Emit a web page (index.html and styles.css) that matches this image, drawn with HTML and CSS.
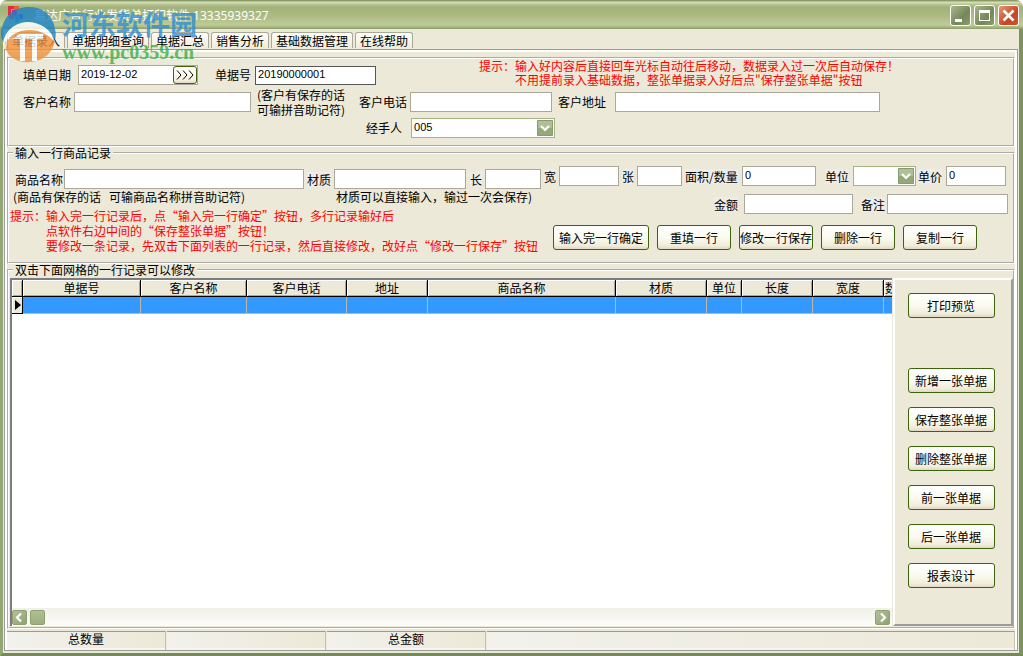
FILE: index.html
```html
<!DOCTYPE html>
<html lang="zh-CN">
<head>
<meta charset="utf-8">
<title>易达广告行业发货单打印软件</title>
<link rel="stylesheet" href="styles.css">
</head>
<body>
<div class="window">
  <header class="titlebar">
    <svg class="app-icon" width="18" height="18" viewBox="0 0 18 18" aria-hidden="true">
      <path d="M1 1h6v3H4v6H1z" fill="#e03040"/><path d="M7 1h5v4H7z" fill="#e8622c"/><path d="M5 5h5v6H5z" fill="#c82890"/><path d="M1 10h6v4H3z" fill="#e8308a"/><path d="M8 10h4v7H8z" fill="#30a0d8"/><path d="M12 9h4v5h-4z" fill="#6a4ad0"/>
    </svg>
    <h1 class="title">易达广告行业发货单打印软件 13335939327</h1>
    <div class="window-buttons">
      <button class="win-btn" aria-label="最小化"><svg width="19" height="19" viewBox="0 0 19 19"><path d="M4 13h7v3H4z" fill="#fff"/></svg></button>
      <button class="win-btn" aria-label="最大化"><svg width="19" height="19" viewBox="0 0 19 19"><path d="M4 4h11v11H4zM5 7v7h9V7z" fill="#fff" fill-rule="evenodd"/></svg></button>
      <button class="win-btn close" aria-label="关闭"><svg width="19" height="19" viewBox="0 0 19 19"><path d="M4.500 4.500l10 10M14.500 4.500l-10 10" stroke="#fff" stroke-width="2.600"/></svg></button>
    </div>
  </header>

  <div class="watermark" aria-hidden="true">
    <svg width="62" height="58" viewBox="0 0 62 58">
      <path d="M1 27C3 10 14 1 29 1c14 0 24 8 26 22 1 4 1 7 0 11-6-8-14-13-24-14C18 19 8 25 5 38 2 35 1 31 1 27z" fill="#1b82c4"/>
      <path d="M6 44C6 31 16 23 29 23c11 0 20 4 26 12-2 11-11 20-24 21C20 57 10 53 6 44z" fill="#f0913a"/>
      <path d="M3 40c0-13 10-23 24-24 14 0 25 8 28 20-7-8-16-12-25-12C17 24 8 30 3 40z" fill="#fff"/>
      <path d="M20 28h23v5h-6v22h-5V33h-7v22h-5V33h-8z" fill="#fff"/>
    </svg>
    <div class="watermark-text">
      <div class="watermark-name">河东软件园</div>
      <div class="watermark-url">www.pc0359.cn</div>
    </div>
  </div>

  <div class="client">
    <nav class="tabs" role="tablist">
      <button class="tab selected" role="tab" aria-selected="true">单据录入</button>
      <button class="tab" role="tab">单据明细查询</button>
      <button class="tab" role="tab">单据汇总</button>
      <button class="tab" role="tab">销售分析</button>
      <button class="tab" role="tab">基础数据管理</button>
      <button class="tab" role="tab">在线帮助</button>
    </nav>

    <main class="page">
      <section class="group order">
        <div class="order-top">
          <div class="row order-ids">
            <label class="label-date" for="date">填单日期</label>
            <div class="date-field"><input id="date" class="date" value="2019-12-02"><button class="btn date-btn" aria-label="选择日期"><svg width="18" height="10" viewBox="0 0 18 10"><path d="M1 0.500l4 4.500-4 4.500M7 0.500l4 4.500-4 4.500M13 0.500l4 4.500-4 4.500" fill="none" stroke="#000"/></svg></button></div>
            <label class="label-no" for="no">单据号</label>
            <input id="no" class="field dark no" value="20190000001">
          </div>
          <div class="tips order-tips">
            <div>提示：输入好内容后直接回车光标自动往后移动，数据录入过一次后自动保存！</div>
            <div class="indent">不用提前录入基础数据，整张单据录入好后点"保存整张单据"按钮</div>
          </div>
        </div>
        <div class="row customer">
          <label for="cname">客户名称</label>
          <input id="cname" class="field cname">
          <div class="customer-note">(客户有保存的话<br>可输拼音助记符)</div>
          <label for="phone">客户电话</label>
          <input id="phone" class="field phone">
          <label for="addr">客户地址</label>
          <input id="addr" class="field addr">
        </div>
        <div class="row handler">
          <label for="handler">经手人</label>
          <div class="combo handler-combo">
            <select id="handler"><option>005</option></select>
            <svg class="arrow" width="16" height="16" viewBox="0 0 16 16"><path d="M0.500 0.500h15v15H.5z" fill="#96a878" stroke="#8a9a70"/><path d="M1 1h14v7H1z" fill="#b0bf98"/><path d="M4 6l4 4 4-4" fill="none" stroke="#fff" stroke-width="2.200"/></svg>
          </div>
        </div>
      </section>

      <fieldset class="group item">
        <legend>输入一行商品记录</legend>
        <div class="item-body">
          <div class="item-left">
            <div class="row item-row">
              <label for="goods">商品名称</label><input id="goods" class="field goods">
              <label for="material">材质</label><input id="material" class="field material">
              <label for="len">长</label><input id="len" class="field len">
            </div>
            <div class="item-notes"><span class="note-goods">(商品有保存的话&nbsp;&nbsp; 可输商品名称拼音助记符)</span><span>材质可以直接输入，输过一次会保存)</span></div>
            <div class="tips item-tips">
              <div>提示：输入完一行记录后，点“输入完一行确定”按钮，多行记录输好后</div>
              <div class="indent">点软件右边中间的“保存整张单据”按钮！</div>
              <div class="indent">要修改一条记录，先双击下面列表的一行记录，然后直接修改，改好点“修改一行保存”按钮</div>
            </div>
          </div>
          <div class="item-right">
            <div class="row size-row">
              <label for="wid">宽</label><input id="wid" class="field wid">
              <label for="sheets">张</label><input id="sheets" class="field sheets">
              <label class="label-area" for="area">面积/数量</label><input id="area" class="field area" value="0">
              <label class="label-unit" for="unit">单位</label>
              <div class="combo unit-combo">
                <select id="unit"><option></option></select>
                <svg class="arrow" width="16" height="16" viewBox="0 0 16 16"><path d="M0.500 0.500h15v15H.5z" fill="#96a878" stroke="#8a9a70"/><path d="M1 1h14v7H1z" fill="#b0bf98"/><path d="M4 6l4 4 4-4" fill="none" stroke="#fff" stroke-width="2.200"/></svg>
              </div>
              <label class="label-price" for="price">单价</label><input id="price" class="field price" value="0">
            </div>
            <div class="row amount-row">
              <label for="amount">金额</label><input id="amount" class="field amount">
              <label class="label-remark" for="remark">备注</label><input id="remark" class="field remark">
            </div>
            <div class="row button-row">
              <button class="btn confirm">输入完一行确定</button>
              <button class="btn">重填一行</button>
              <button class="btn">修改一行保存</button>
              <button class="btn">删除一行</button>
              <button class="btn">复制一行</button>
            </div>
          </div>
        </div>
      </fieldset>

      <fieldset class="group list">
        <legend>双击下面网格的一行记录可以修改</legend>
        <div class="list-body">
          <div class="grid">
            <div class="grid-view">
              <table>
                <colgroup><col class="c-mark"><col class="c-no"><col class="c-name"><col class="c-phone"><col class="c-addr"><col class="c-goods"><col class="c-mat"><col class="c-unit"><col class="c-size"><col class="c-size"><col class="c-qty"></colgroup>
                <thead><tr><th></th><th>单据号</th><th>客户名称</th><th>客户电话</th><th>地址</th><th>商品名称</th><th>材质</th><th>单位</th><th>长度</th><th>宽度</th><th class="qty">数量</th></tr></thead>
                <tbody><tr><td class="mark"><svg width="7" height="10" viewBox="0 0 7 10"><path d="M1 0l6 5-6 5z"/></svg></td><td></td><td></td><td></td><td></td><td></td><td></td><td></td><td></td><td></td><td></td></tr></tbody>
              </table>
            </div>
            <div class="scrollbar">
              <button class="scroll-btn" aria-label="向左滚动"><svg width="13" height="13" viewBox="0 0 13 13"><path d="M8 2.500l-4 4 4 4" fill="none" stroke="#fff" stroke-width="2.200"/></svg></button>
              <div class="thumb"></div>
              <button class="scroll-btn right" aria-label="向右滚动"><svg width="13" height="13" viewBox="0 0 13 13"><path d="M5 2.500l4 4-4 4" fill="none" stroke="#fff" stroke-width="2.200"/></svg></button>
            </div>
          </div>
          <aside class="side">
            <button class="btn preview">打印预览</button>
            <button class="btn">新增一张单据</button>
            <button class="btn">保存整张单据</button>
            <button class="btn">删除整张单据</button>
            <button class="btn">前一张单据</button>
            <button class="btn">后一张单据</button>
            <button class="btn">报表设计</button>
          </aside>
        </div>
      </fieldset>

      <footer class="status">
        <div class="cell">总数量</div>
        <div class="cell"></div>
        <div class="cell">总金额</div>
        <div class="cell rest"></div>
      </footer>
    </main>
  </div>
</div>
</body>
</html>
```

FILE: styles.css
```css
* { box-sizing: border-box; }

body {
  margin: 0;
  background: #fff;
  color: #000;
  font: 12px/15px "Noto Sans CJK SC", "Noto Sans", sans-serif;
}

button, input, select { font: inherit; color: inherit; margin: 0; }

.window {
  position: relative;
  display: flex;
  flex-direction: column;
  min-height: 100vh;
  background: #ece9d8;
  border-radius: 7px 7px 0 0;
  overflow: hidden;
}

/* Title bar */
.titlebar {
  display: flex;
  align-items: center;
  height: 29px;
  padding: 2px 4px 0 7px;
  background: linear-gradient(#8a9c66 0, #8a9c66 1px, #dde4c0 2px, #bcc898 4px, #a3b27b 7px, #abb983 15px, #bfcb98 25px, #a9b883 27px, #8a9b65 29px);
}
.app-icon { margin: -4px 9px 0 0; }
.title {
  flex: 1;
  margin: 0;
  color: #fff;
  font: 12px/16px "Noto Sans", "Noto Sans CJK SC", sans-serif;
}
.window-buttons { display: flex; gap: 3px; }
.win-btn {
  width: 21px;
  height: 21px;
  padding: 0;
  border: 1px solid #fff;
  border-radius: 3px;
  background: linear-gradient(135deg, #a9b58e, #75875a 60%, #8c9d6c);
}
.win-btn svg { display: block; }
.win-btn.close { background: linear-gradient(135deg, #e59a7a, #cc4420 60%, #c8552f); }

/* Site mark lying over the top left corner */
.watermark {
  position: absolute;
  left: 0;
  top: 6px;
  z-index: 2;
  display: flex;
  opacity: 0.8;
  pointer-events: none;
}
.watermark-name {
  height: 36px;
  color: #2f8fd6;
  font: bold 27px/36px "Noto Sans CJK SC", sans-serif;
}
.watermark-url {
  color: #3fae49;
  font: bold 20px/20px "Liberation Serif", serif;
}

/* Client area and tabs */
.client {
  flex: 1;
  display: flex;
  flex-direction: column;
  padding: 3px 1px 2px;
  border: 3px solid #8a9e69;
  border-top: 0;
  border-right-width: 4px;
  border-left-color: #93a774;
  border-bottom-color: #728a58;
  border-right-color: #7c9261;
}
.tabs { display: flex; gap: 2px; height: 17px; padding-left: 3px; }
.tab {
  height: 16px;
  padding: 0 4px;
  border: 1px solid #a9a997;
  border-bottom: 0;
  border-radius: 3px 3px 0 0;
  background: linear-gradient(#fffef8, #efecdc);
  line-height: 14px;
  white-space: nowrap;
}
.tab.selected { background: #f4f2e6; }
.page {
  flex: 1;
  display: flex;
  flex-direction: column;
  padding: 7px 2px 0;
  border: 1px solid #9c9c9c;
  box-shadow: inset 2px 2px #fff, inset -2px 0 #fff;
}

/* Shared form parts */
.group {
  min-width: 0;
  margin: 0;
  padding: 0;
  border: 2px groove #fff;
}
legend {
  height: 12px;
  margin-left: 4px;
  padding: 0 2px;
  line-height: 12px;
}
.row { display: flex; align-items: center; }
label { padding-bottom: 2px; white-space: nowrap; }
.field, .date-field, .combo {
  height: 20px;
  border: 1px solid #aca899;
  background: #fff;
}
.field, .date, select {
  padding: 0 2px 3px;
  border-radius: 0;
  outline: 0;
  font: 11px/14px "Liberation Sans", sans-serif;
}
.field.dark { height: 19px; border-color: #555; }
.combo { position: relative; border-color: #a3b684; }
.combo select {
  display: block;
  width: 100%;
  height: 18px;
  border: 0;
  background: none;
  appearance: none;
}
.arrow { position: absolute; right: 1px; top: 1px; pointer-events: none; }
.btn {
  height: 25px;
  padding: 0;
  border: 1px solid #3b640b;
  border-radius: 3px;
  background: linear-gradient(#fff, #fbfaf0 50%, #f1eddc 85%, #e2d8c4);
  white-space: nowrap;
}
.tips { color: #f00; white-space: nowrap; }
.indent { padding-left: 36px; }

/* Order header */
.order { padding: 0 0 7px; }
.order-top { display: flex; align-items: flex-start; height: 28px; padding-left: 14px; }
.order-ids { padding-top: 6px; }
.label-date { margin-right: 7px; }
.date-field { display: flex; width: 120px; }
.date { flex: 1; min-width: 0; border: 0; background: none; }
.date-btn { width: 24px; height: 18px; }
.date-btn svg { display: block; margin: auto; }
.label-no { margin: 0 4px 0 17px; }
.no { width: 121px; }
.order-tips { margin-left: 103px; line-height: 14px; }
.customer { height: 30px; padding: 0 133px 0 14px; }
.cname { flex: 177 1 177px; min-width: 0; margin: 0 6px 0 3px; }
.phone { flex: 142 1 142px; min-width: 0; margin: 0 6px 0 3px; }
.addr { flex: 265 1 265px; min-width: 0; margin-left: 9px; }
.customer-note { width: 102px; white-space: nowrap; }
.handler { margin-top: 1px; padding-left: 357px; }
.handler-combo { width: 144px; margin-left: 9px; }

/* Item entry */
.item label { padding: 0; background: #ececec; }
.item-body { display: flex; padding-bottom: 9px; }
.item-left { width: 532px; padding-top: 10px; }
.item-row { padding-left: 6px; }
.goods { width: 240px; margin: 0 3px 0 1px; }
.material { width: 132px; margin: 0 4px 0 3px; }
.len { width: 56px; margin-left: 3px; }
.item-notes { display: flex; padding-left: 4px; white-space: nowrap; }
.note-goods { width: 323px; }
.item-tips { margin-top: 4px; padding-left: 1px; }
.item-right { flex: 1; padding-top: 7px; }
.size-row { padding-left: 3px; }
.wid { width: 60px; margin: 0 3px; }
.sheets { width: 45px; margin: 0 3px; }
.label-area { width: 54px; }
.area { width: 74px; margin: 0 9px 0 3px; }
.unit-combo { width: 63px; margin: 0 2px 0 4px; }
.price { width: 60px; margin-left: 4px; }
.amount-row { margin-top: 8px; padding-left: 173px; }
.amount { width: 109px; margin: 0 8px 0 6px; }
.remark { width: 121px; margin-left: 2px; }
.button-row { gap: 8px; margin-top: 11px; padding-left: 12px; }
.button-row .btn { width: 74px; }
.button-row .confirm { width: 96px; }

/* Record list */
.list { flex: 1; }
.list-body { display: flex; gap: 1px; padding: 2px 0 0 1px; }
.grid {
  flex: 1;
  min-width: 0;
  display: flex;
  flex-direction: column;
  border: solid #7d7d7d;
  border-width: 2px 0 0 2px;
  background: #fff;
}
.grid-view { flex: 1; overflow: hidden; }
table { width: 908px; table-layout: fixed; border-collapse: separate; border-spacing: 0; }
.c-mark { width: 11px; }
.c-no { width: 118px; }
.c-name { width: 106px; }
.c-phone { width: 100px; }
.c-addr { width: 81px; }
.c-goods { width: 188px; }
.c-mat { width: 91px; }
.c-unit { width: 35px; }
.c-size { width: 71px; }
.c-qty { width: 36px; }
th {
  height: 17px;
  padding: 0;
  border: solid #000;
  border-width: 0 1px 1px 0;
  background: #ece9d8;
  box-shadow: inset 1px 1px #fff, inset -1px -1px #aca899;
  font-weight: normal;
  line-height: 16px;
}
th.qty { padding-left: 1px; text-align: left; }
td {
  height: 17px;
  padding: 0;
  border: solid #b8b8b0;
  border-width: 0 1px 1px 0;
  background: #39f;
}
td.mark {
  border-color: #000;
  background: #ece9d8;
  box-shadow: inset 1px 1px #fff;
}
td.mark svg { display: block; margin: auto; }
.scrollbar {
  display: flex;
  align-items: center;
  gap: 3px;
  height: 18px;
  padding: 0 2px 0 0;
  background: linear-gradient(#f0efe8, #fdfdfa);
}
.scroll-btn {
  width: 15px;
  height: 15px;
  padding: 0;
  border: 1px solid #8ea070;
  border-radius: 2px;
  background: linear-gradient(135deg, #b3c19a, #8fa272);
}
.scroll-btn svg { display: block; }
.scroll-btn.right { margin-left: auto; }
.thumb {
  width: 15px;
  height: 15px;
  border: 1px solid #8ea070;
  border-radius: 2px;
  background: linear-gradient(#b0bf94, #9caf7e);
}
.side {
  display: flex;
  flex-direction: column;
  align-items: center;
  gap: 14px;
  width: 120px;
  padding: 13px 4px 36px 0;
  border: 2px solid;
  border-color: #fff #9c9c9c #9c9c9c #fff;
}
.side .btn { width: 87px; }
.side .preview { margin-bottom: 36px; }

/* Status bar */
.status { display: flex; gap: 1px; height: 21px; padding-top: 2px; }
.cell {
  width: 159px;
  border: solid #c5c2b0;
  border-width: 1px 1px 0 0;
  border-top-color: #9c9c8c;
  background: linear-gradient(90deg, #f2f1ec, #ece9d8);
  box-shadow: inset 0 -2px #f6f5ee;
  line-height: 14px;
  text-align: center;
}
.cell.rest { flex: 1; }
```
